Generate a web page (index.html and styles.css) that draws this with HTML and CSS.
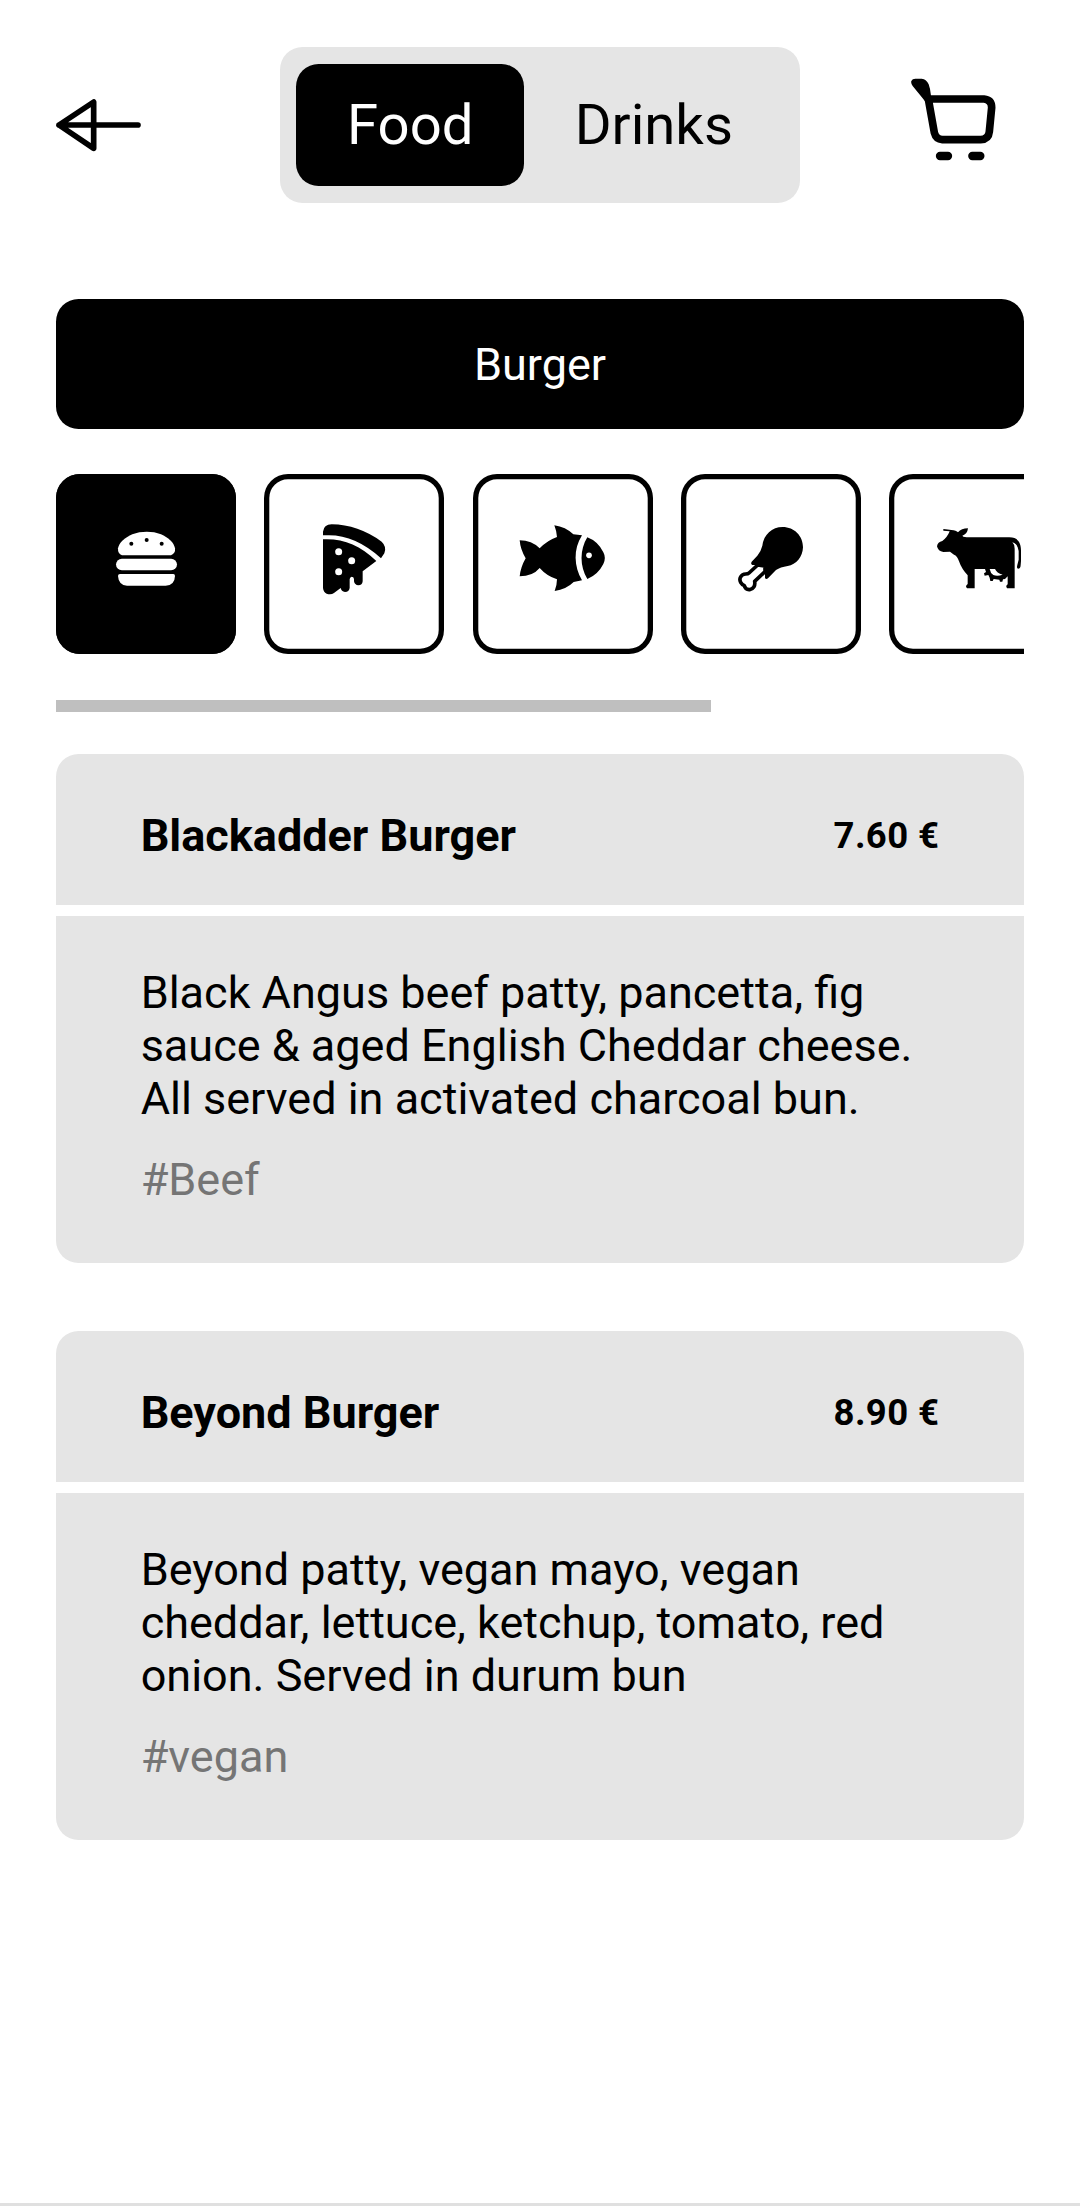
FILE: index.html
```html
<!DOCTYPE html>
<html lang="en">
<head>
<meta charset="utf-8">
<title>Menu</title>
<link rel="stylesheet" href="styles.css">
</head>
<body>
<div class="screen">
  <header class="topbar">
    <a class="back" aria-label="Back">
      <svg width="86" height="54" viewBox="48 51 258 162" fill="none" stroke="#000" stroke-width="17" stroke-linecap="round" stroke-linejoin="round">
        <path d="M57 132L161 63V202ZM57 132H294"/>
      </svg>
    </a>
    <nav class="toggle">
      <span class="segment segment-active">Food</span>
      <span class="segment">Drinks</span>
    </nav>
    <a class="cart" aria-label="Cart">
      <svg width="85" height="94" viewBox="62 52 255 282">
        <path d="M75 54H94Q109 56 115 71Q120 84 122 105L104 122L97 113L67 76Q61 68 63 61Q66 54 75 54Z"/>
        <path d="M114 115H281Q304 117 304 141L297 213Q295 236 271 237H156Q137 236 132 216L114 115Z" fill="none" stroke="#000" stroke-width="23" stroke-linejoin="round"/>
        <path d="M149 286H173M246 286H270" stroke="#000" stroke-width="25" stroke-linecap="round"/>
      </svg>
    </a>
  </header>

  <div class="category-title">Burger</div>

  <div class="tiles">
    <div class="tile tile-active">
      <svg viewBox="48 42 540 540" fill="#fff">
        <path d="M234 265C237 248 256 232 277 223C304 213 337 213 363 223C384 232 402 248 405 265Q407 280 393 286H246Q233 281 234 265Z"/>
        <rect x="228" y="296" width="183" height="35" rx="17.5"/>
        <path d="M240 342H400Q405 342 405 348Q404 376 377 377H261Q236 376 234 348Q234 342 240 342Z"/>
        <g fill="#000"><circle cx="274" cy="251" r="6"/><circle cx="320" cy="240" r="6"/><circle cx="365" cy="251" r="6"/></g>
      </svg>
    </div>
    <div class="tile">
      <svg viewBox="27 27 540 540">
        <path d="M204 211V200Q206 179 230 178Q309 179 380 230Q396 245 388 265L378 280Q302 211 222 211Z"/>
        <path d="M204 223C264 220 314 240 364 288L323 319V349Q322 361 310 361Q299 360 297 349V342Q296 335 290 335Q284 337 284 343V369Q282 381 270 381Q259 380 257 369L237 384Q228 390 215 386Q205 381 204 369Z"/>
        <g fill="#fff"><circle cx="251" cy="260" r="10.5"/><circle cx="290" cy="287" r="10.5"/><circle cx="251" cy="320" r="10.5"/></g>
      </svg>
    </div>
    <div class="tile">
      <svg viewBox="24 27 540 540">
        <path d="M164 226Q200 226 224 250Q247 226 276 216Q275 199 268 181Q302 186 325 208L351 211C324 253 327 305 351 346L326 351Q304 373 269 378Q276 360 276 343Q245 333 224 309Q203 334 164 334Q167 306 182 280Q166 253 164 226Z"/>
        <path d="M367 217Q399 229 415 262Q424 279 415 297Q399 329 367 342C344 304 344 254 367 217Z"/>
        <circle cx="372" cy="271" r="8.5" fill="#fff"/>
      </svg>
    </div>
    <div class="tile">
      <svg viewBox="18 27 540 540">
        <path d="M323 186C358 186 384 213 384 247C383 276 364 299 338 303Q316 306 303 315L279 340Q273 344 270 339V317L251 300H232Q226 297 230 290L247 272Q258 259 262 242C266 209 291 186 323 186Z"/>
        <path d="M248 300L222 324Q219 327 212 327C198 328 191 341 197 352Q201 359 208 362Q211 375 224 374C236 372 241 362 239 349L270 320V303Z" fill="#fff" stroke="#000" stroke-width="11" stroke-linejoin="round"/>
        <path d="M250 290H278V318L269 326V302H247Z"/>
      </svg>
    </div>
    <div class="tile">
      <svg viewBox="27 27 540 540">
        <path d="M190 192Q204 193 214 195Q229 196 234 202Q244 190 264 190Q262 208 247 212L250 215L260 217H388C414 217 423 233 423 257V288L422 300Q422 311 414 311Q409 310 412 300L416 284V258Q414 237 397 232Q404 238 404 251V370H381L379 365Q378 361 383 358V334Q377 343 369 343L367 350H360L358 344L341 342L338 348H331L329 338L325 330L314 332L312 325L318 321L315 312H284V370H261L258 365Q258 360 263 357V331Q245 312 237 289Q232 272 222 269L210 260L190 261Q174 259 171 244Q173 231 187 228Q202 217 209 199L190 197Z"/>
        <path d="M329 312H345Q350 324 368 329Q352 335 340 330Q331 324 329 312Z" fill="#fff"/>
      </svg>
    </div>
  </div>
  <div class="scroll-indicator"></div>

  <main class="menu">
    <article class="item">
      <div class="item-head">
        <h2 class="item-name">Blackadder Burger</h2>
        <span class="item-price">7.60 €</span>
      </div>
      <div class="item-body">
        <p class="item-text">Black Angus beef patty, pancetta, fig<br>sauce &amp; aged English Cheddar cheese.<br>All served in activated charcoal bun.</p>
        <p class="item-tag">#Beef</p>
      </div>
    </article>
    <article class="item">
      <div class="item-head">
        <h2 class="item-name">Beyond Burger</h2>
        <span class="item-price">8.90 €</span>
      </div>
      <div class="item-body">
        <p class="item-text">Beyond patty, vegan mayo, vegan<br>cheddar, lettuce, ketchup, tomato, red<br>onion. Served in durum bun</p>
        <p class="item-tag">#vegan</p>
      </div>
    </article>
  </main>
  <div class="bottom-line"></div>
</div>
</body>
</html>
```
FILE: styles.css
```css
* {
  box-sizing: border-box;
}

body {
  margin: 0;
  background: #fff;
  color: #000;
  font-family: Roboto, "Liberation Sans", sans-serif;
  font-size: 45px;
}

.screen {
  display: flex;
  flex-direction: column;
  height: 2208px;
  padding: 46.5px 56.25px 0;
  overflow: hidden;
}

.topbar {
  display: grid;
  flex: none;
  grid-template-columns: 1fr auto 1fr;
  align-items: center;
  height: 156px;
}

.back,
.cart {
  display: flex;
}

.cart {
  justify-content: flex-end;
  padding-right: 28px;
}

.toggle {
  display: flex;
  height: 100%;
  padding: 17px 16px;
  border-radius: 22.5px;
  background: #e5e5e5;
}

.segment {
  display: flex;
  align-items: center;
  padding: 1px 50.6px 0;
  border-radius: 22.5px;
  font-size: 56.25px;
}

.segment-active {
  background: #000;
  color: #fff;
}

.category-title {
  display: flex;
  flex: none;
  align-items: center;
  justify-content: center;
  height: 130.7px;
  margin-top: 96.1px;
  padding-top: 1px;
  border-radius: 22.5px;
  background: #000;
  color: #fff;
}

.tiles {
  display: flex;
  flex: none;
  gap: 28.125px;
  margin-top: 45px;
  overflow: hidden;
}

.tile {
  flex: none;
  width: 180px;
  height: 180px;
  border-radius: 24px;
  box-shadow: inset 0 0 0 5.3px #000;
}

.tile svg {
  display: block;
  width: 100%;
  height: 100%;
}

.tile-active {
  background: #000;
}

.scroll-indicator {
  flex: none;
  width: 654.5px;
  height: 11.25px;
  margin-top: 46px;
  background: #bfbfbf;
}

.menu {
  display: flex;
  flex-direction: column;
  gap: 68.2px;
  margin-top: 42px;
}

.item {
  display: flex;
  flex-direction: column;
  gap: 11.25px;
  height: 509.1px;
  border-radius: 22.5px;
  overflow: hidden;
}

.item-head {
  display: flex;
  flex: none;
  align-items: center;
  justify-content: space-between;
  height: 151px;
  padding: 13px 84.375px 0;
  background: #e5e5e5;
}

.item-name {
  margin: 0;
  font-size: 45px;
  font-weight: 700;
}

.item-price {
  font-size: 36.5px;
  font-weight: 700;
  letter-spacing: 0.4px;
}

.item-body {
  flex: 1;
  padding: 50.4px 84.375px 0;
  background: #e5e5e5;
}

.item-text,
.item-tag {
  margin: 0;
  line-height: 53px;
  white-space: nowrap;
}

.item-tag {
  margin-top: 28px;
  color: #757575;
}

.bottom-line {
  height: 3px;
  margin: auto -56.25px 2px;
  background: #e0e0e0;
}
```
